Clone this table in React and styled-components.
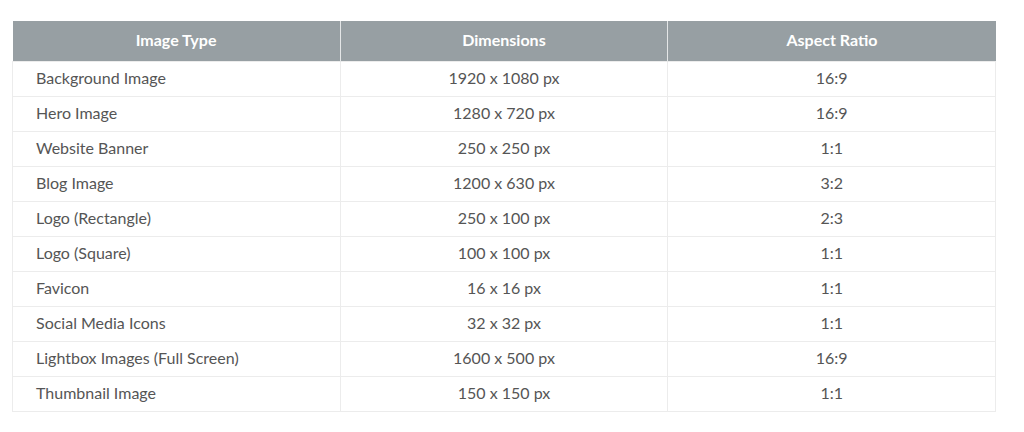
import { styled, createGlobalStyle } from "styled-components";

const GlobalStyle = createGlobalStyle`
  body {
    margin: 0;
    background: #fff;
    font-family: Lato, "Open Sans", sans-serif;
  }
`;

const Page = styled.div`
  padding: 21px 28px 20px 12px;
`;

const Table = styled.table`
  width: 984px;
  border-collapse: collapse;
  table-layout: fixed;
  font-size: 16px;
`;

const HeadRow = styled.tr`
  height: 40px;
`;

const HeadCell = styled.th`
  padding: 0 23px 3px;
  background: #979fa3;
  color: #fff;
  font-weight: 700;
  text-align: center;
  border-left: 1px solid #e4e6e7;
  &:first-child {
    border-left: none;
  }
`;

const Row = styled.tr`
  height: 35px;
`;

const Cell = styled.td`
  padding: 0 23px 3px;
  color: #555;
  text-align: ${({ $align }) => $align || "center"};
  border: 1px solid #ececec;
`;

const rows = [
  ["Background Image", "1920 x 1080 px", "16:9"],
  ["Hero Image", "1280 x 720 px", "16:9"],
  ["Website Banner", "250 x 250 px", "1:1"],
  ["Blog Image", "1200 x 630 px", "3:2"],
  ["Logo (Rectangle)", "250 x 100 px", "2:3"],
  ["Logo (Square)", "100 x 100 px", "1:1"],
  ["Favicon", "16 x 16 px", "1:1"],
  ["Social Media Icons", "32 x 32 px", "1:1"],
  ["Lightbox Images (Full Screen)", "1600 x 500 px", "16:9"],
  ["Thumbnail Image", "150 x 150 px", "1:1"],
];

export default function App() {
  return (
    <Page>
      <GlobalStyle />
      <Table>
        <thead>
          <HeadRow>
            <HeadCell>Image Type</HeadCell>
            <HeadCell>Dimensions</HeadCell>
            <HeadCell>Aspect Ratio</HeadCell>
          </HeadRow>
        </thead>
        <tbody>
          {rows.map(([type, dims, ratio]) => (
            <Row key={type}>
              <Cell $align="left">{type}</Cell>
              <Cell>{dims}</Cell>
              <Cell>{ratio}</Cell>
            </Row>
          ))}
        </tbody>
      </Table>
    </Page>
  );
}
